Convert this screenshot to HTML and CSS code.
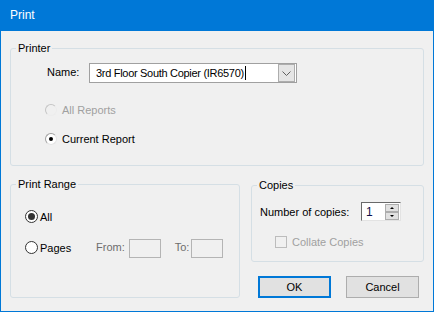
FILE: index.html
```html
<!DOCTYPE html>
<html lang="en">
<head>
    <meta charset="UTF-8">
    <meta name="viewport" content="width=device-width, initial-scale=1.0">
    <title>Print</title>
    <link rel="stylesheet" href="styles.css">
</head>
<body>
    <div class="window">
        <div class="titlebar">Print</div>
        <div class="client">
            <fieldset class="group printer-group">
                <legend>Printer</legend>
                <div class="name-row">
                    <span class="name-label">Name:</span>
                    <div class="combo">
                        <span class="combo-text">3rd Floor South Copier (IR6570)</span><span class="caret"></span>
                        <span class="combo-btn">
                            <svg width="9" height="5" viewBox="0 0 9 5"><polyline points="0.5,0.5 4.5,4.5 8.5,0.5" fill="none" stroke="#606060" stroke-width="1"/></svg>
                        </span>
                    </div>
                </div>
                <div class="report-row first">
                    <span class="classic-radio disabled"></span>
                    <span class="muted">All Reports</span>
                </div>
                <div class="report-row">
                    <span class="classic-radio checked"></span>
                    <span>Current Report</span>
                </div>
            </fieldset>

            <div class="bottom">
                <fieldset class="group range-group">
                    <legend>Print Range</legend>
                    <div class="range-row first">
                        <span class="radio checked"></span>
                        <span>All</span>
                    </div>
                    <div class="range-row">
                        <span class="radio-label">
                            <span class="radio"></span>
                            <span>Pages</span>
                        </span>
                        <span class="page-label">From:</span>
                        <span class="page-box"></span>
                        <span class="page-label to">To:</span>
                        <span class="page-box"></span>
                    </div>
                </fieldset>

                <div class="side">
                    <fieldset class="group copies-group">
                        <legend>Copies</legend>
                        <div class="copies-row">
                            <span class="copies-label">Number of copies:</span>
                            <div class="spin">
                                <span class="spin-value">1</span>
                                <span class="spin-btns">
                                    <span class="spin-btn"><span class="arrow-up"></span></span>
                                    <span class="spin-btn"><span class="arrow-down"></span></span>
                                </span>
                            </div>
                        </div>
                        <div class="collate-row">
                            <span class="checkbox"></span>
                            <span class="muted">Collate Copies</span>
                        </div>
                    </fieldset>
                    <div class="buttons">
                        <button class="button default">OK</button>
                        <button class="button">Cancel</button>
                    </div>
                </div>
            </div>
        </div>
    </div>
</body>
</html>
```

FILE: styles.css
```css
body {
    margin: 0;
    font-family: "Liberation Sans", Arial, sans-serif;
    font-size: 11px;
    color: #000;
    background-color: #f0f0f0;
}
.window {
    width: 434px;
    height: 312px;
    box-sizing: border-box;
    border: 1px solid #0078d7;
    border-top: none;
    background-color: #f0f0f0;
    overflow: hidden;
}
.titlebar {
    height: 31px;
    line-height: 31px;
    padding-left: 9px;
    background-color: #0078d7;
    color: white;
    font-size: 12px;
}
.client {
    padding: 10px 9px 0 9px;
}

/* group boxes */
.group {
    margin: 0;
    padding: 0;
    border: 1px solid #d5dfe5;
    border-radius: 3px;
    min-width: 0;
}
.group legend {
    margin-left: 5px;
    padding: 0 2px;
    line-height: 14px;
}
.muted {
    color: #a0a0a0;
}

/* printer */
.printer-group {
    padding-bottom: 20px;
}
.name-row {
    display: flex;
    align-items: center;
    margin-top: 8px;
    padding-left: 36px;
    height: 20px;
}
.name-label {
    width: 42px;
    padding-bottom: 3px;
}
.combo {
    width: 208px;
    height: 20px;
    box-sizing: border-box;
    border: 1px solid #a0a0a0;
    background-color: white;
    display: flex;
    align-items: center;
    padding-left: 6px;
}
.combo-text {
    letter-spacing: -0.3px;
    white-space: nowrap;
}
.caret {
    width: 1px;
    height: 14px;
    margin-left: 1px;
    background-color: #000;
}
.combo-btn {
    margin-left: auto;
    margin-right: 1px;
    width: 17px;
    height: 18px;
    box-sizing: border-box;
    border: 1px solid #adadad;
    background-color: #e5e5e5;
    display: flex;
    align-items: center;
    justify-content: center;
}
.report-row {
    display: flex;
    align-items: center;
    height: 13px;
    margin-top: 16px;
    padding-left: 34px;
}
.report-row.first {
    margin-top: 20px;
}
.classic-radio {
    width: 12px;
    height: 12px;
    box-sizing: border-box;
    border-radius: 50%;
    border: 1px solid #a0a0a0;
    border-right-color: #e3e3e3;
    border-bottom-color: #e3e3e3;
    background-color: white;
    margin-right: 5px;
    display: flex;
    align-items: center;
    justify-content: center;
}
.classic-radio.disabled {
    border-color: #c4c4c4 #ececec #ececec #c4c4c4;
    background-color: #f0f0f0;
}
.classic-radio.checked::after {
    content: "";
    width: 4px;
    height: 4px;
    border-radius: 50%;
    background-color: #000;
}

/* bottom area */
.bottom {
    display: flex;
    gap: 11px;
    margin-top: 11px;
}
.range-group {
    width: 230px;
    box-sizing: border-box;
    padding-bottom: 39px;
}
.range-row {
    display: flex;
    align-items: center;
    margin-top: 16px;
    padding-left: 14px;
    height: 19px;
}
.range-row.first {
    margin-top: 19px;
    height: 13px;
}
.radio-label {
    display: flex;
    align-items: center;
    width: 71px;
    padding-bottom: 2px;
}
.radio {
    width: 13px;
    height: 13px;
    box-sizing: border-box;
    border-radius: 50%;
    border: 1px solid #333;
    background-color: white;
    margin-right: 2px;
    display: flex;
    align-items: center;
    justify-content: center;
}
.radio.checked::after {
    content: "";
    width: 7px;
    height: 7px;
    border-radius: 50%;
    background-color: #333;
}
.page-label {
    color: #6d6d6d;
    margin-right: 4px;
    padding-bottom: 3px;
}
.page-label.to {
    margin-left: 14px;
    margin-right: 2px;
}
.page-box {
    width: 32px;
    height: 19px;
    box-sizing: border-box;
    border: 1px solid #b4b4b4;
}

.side {
    width: 173px;
}
.copies-group {
    margin-top: 1px;
    padding-bottom: 13px;
}
.copies-row {
    display: flex;
    align-items: center;
    margin-top: 10px;
    padding-left: 8px;
    height: 19px;
}
.copies-label {
    width: 101px;
}
.spin {
    width: 40px;
    height: 19px;
    box-sizing: border-box;
    border: 1px solid;
    border-color: #696969 #e3e3e3 #e3e3e3 #696969;
    background-color: white;
    display: flex;
    align-items: center;
}
.spin-value {
    font-size: 12px;
    padding-left: 4px;
    color: #10104a;
}
.spin-btns {
    margin-left: auto;
    margin-right: 1px;
    display: flex;
    flex-direction: column;
}
.spin-btn {
    width: 14px;
    height: 8px;
    box-sizing: border-box;
    border: 1px solid #adadad;
    background-color: #e1e1e1;
    display: flex;
    align-items: center;
    justify-content: center;
}
.arrow-up {
    border-left: 2px solid transparent;
    border-right: 2px solid transparent;
    border-bottom: 2px solid #000;
}
.arrow-down {
    border-left: 2px solid transparent;
    border-right: 2px solid transparent;
    border-top: 2px solid #000;
}
.collate-row {
    display: flex;
    align-items: center;
    margin-top: 15px;
    padding-left: 23px;
    height: 12px;
}
.checkbox {
    width: 12px;
    height: 12px;
    box-sizing: border-box;
    border: 1px solid #bcbcbc;
    margin-right: 5px;
}
.buttons {
    display: flex;
    gap: 15px;
    margin-top: 14px;
    padding-left: 7px;
}
.button {
    width: 73px;
    height: 22px;
    box-sizing: border-box;
    border: 1px solid #adadad;
    background-color: #e1e1e1;
    font-family: "Liberation Sans", Arial, sans-serif;
    font-size: 11px;
    color: #000;
    padding: 0;
}
.button.default {
    border: 2px solid #0078d7;
}
```
